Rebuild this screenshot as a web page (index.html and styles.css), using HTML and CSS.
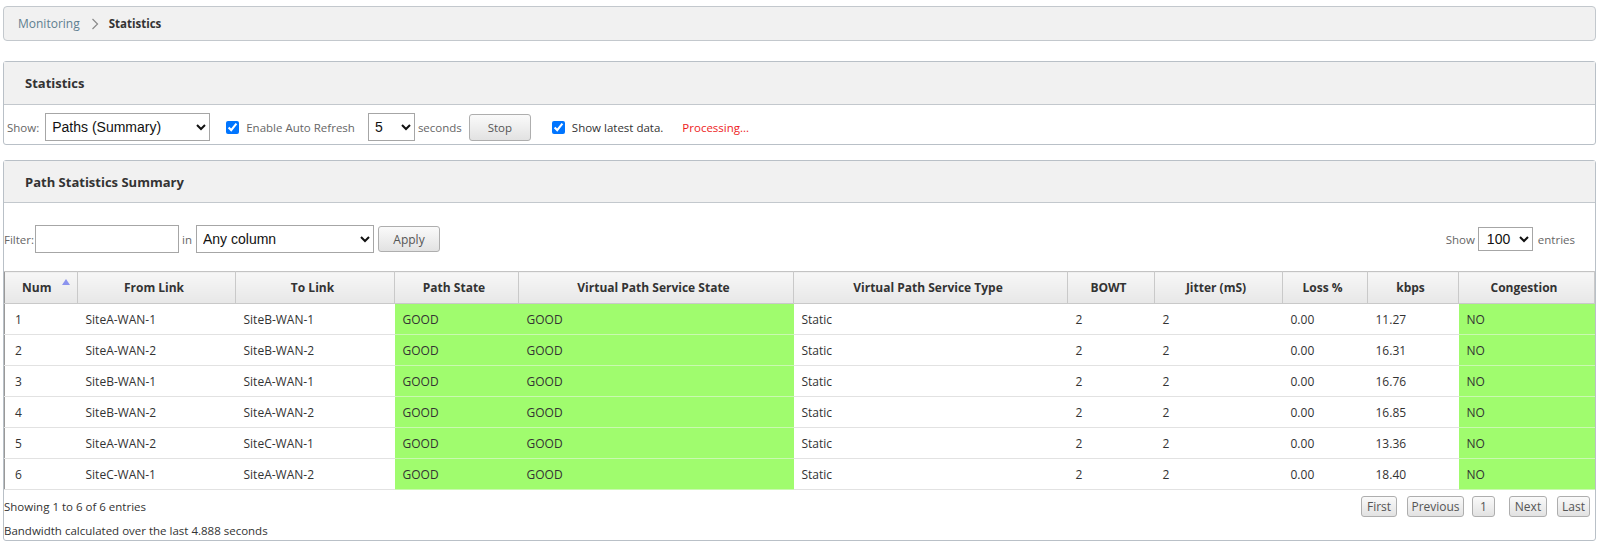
FILE: index.html
```html
<!DOCTYPE html>
<html>
<head>
<meta charset="utf-8">
<link rel="stylesheet" href="styles.css">
</head>
<body>
<div class="page">
  <nav class="crumbs">
    <span class="crumb-link">Monitoring</span>
    <svg class="crumb-sep" width="8" height="12" viewBox="0 0 8 12"><polyline points="1.5,1 6.5,6 1.5,11" fill="none" stroke="#8a8a8a" stroke-width="1.2"/></svg>
    <span class="crumb-cur">Statistics</span>
  </nav>

  <section class="panel">
    <div class="panel-head"><h2>Statistics</h2></div>
    <div class="controls">
      <span class="lbl lbl-show">Show:</span>
      <select class="sel sel-show"><option>Paths (Summary)</option></select>
      <label class="chk chk-auto"><input type="checkbox" checked><span>Enable Auto Refresh</span></label>
      <select class="sel sel-secs"><option>5</option></select>
      <span class="lbl lbl-secs">seconds</span>
      <button class="btn btn-stop">Stop</button>
      <label class="chk chk-latest"><input type="checkbox" checked><span>Show latest data.</span></label>
      <span class="processing">Processing...</span>
    </div>
  </section>

  <section class="panel panel-paths">
    <div class="panel-head head-paths"><h2>Path Statistics Summary</h2></div>
    <div class="filter-row">
      <div class="filter-left">
        <span class="lbl">Filter:</span>
        <input class="txt" type="text">
        <span class="lbl lbl-in">in</span>
        <select class="sel sel-col"><option>Any column</option></select>
        <button class="btn btn-apply">Apply</button>
      </div>
      <div class="filter-right">
        <span class="lbl">Show</span>
        <select class="sel sel-entries"><option>100</option></select>
        <span class="lbl">entries</span>
      </div>
    </div>

    <table class="grid">
      <colgroup>
        <col class="w-num"><col class="w-from"><col class="w-to"><col class="w-ps"><col class="w-vpss"><col class="w-vpst"><col class="w-bowt"><col class="w-jit"><col class="w-loss"><col class="w-kbps"><col class="w-cong">
      </colgroup>
      <thead>
        <tr>
          <th class="sorted">Num<span class="sort-up"></span></th>
          <th>From Link</th>
          <th>To Link</th>
          <th>Path State</th>
          <th>Virtual Path Service State</th>
          <th>Virtual Path Service Type</th>
          <th>BOWT</th>
          <th>Jitter (mS)</th>
          <th>Loss %</th>
          <th>kbps</th>
          <th>Congestion</th>
        </tr>
      </thead>
      <tbody>
        <tr><td>1</td><td>SiteA-WAN-1</td><td>SiteB-WAN-1</td><td class="ok">GOOD</td><td class="ok">GOOD</td><td>Static</td><td>2</td><td>2</td><td>0.00</td><td>11.27</td><td class="ok">NO</td></tr>
        <tr><td>2</td><td>SiteA-WAN-2</td><td>SiteB-WAN-2</td><td class="ok">GOOD</td><td class="ok">GOOD</td><td>Static</td><td>2</td><td>2</td><td>0.00</td><td>16.31</td><td class="ok">NO</td></tr>
        <tr><td>3</td><td>SiteB-WAN-1</td><td>SiteA-WAN-1</td><td class="ok">GOOD</td><td class="ok">GOOD</td><td>Static</td><td>2</td><td>2</td><td>0.00</td><td>16.76</td><td class="ok">NO</td></tr>
        <tr><td>4</td><td>SiteB-WAN-2</td><td>SiteA-WAN-2</td><td class="ok">GOOD</td><td class="ok">GOOD</td><td>Static</td><td>2</td><td>2</td><td>0.00</td><td>16.85</td><td class="ok">NO</td></tr>
        <tr><td>5</td><td>SiteA-WAN-2</td><td>SiteC-WAN-1</td><td class="ok">GOOD</td><td class="ok">GOOD</td><td>Static</td><td>2</td><td>2</td><td>0.00</td><td>13.36</td><td class="ok">NO</td></tr>
        <tr><td>6</td><td>SiteC-WAN-1</td><td>SiteA-WAN-2</td><td class="ok">GOOD</td><td class="ok">GOOD</td><td>Static</td><td>2</td><td>2</td><td>0.00</td><td>18.40</td><td class="ok">NO</td></tr>
      </tbody>
    </table>

    <div class="foot-row">
      <span class="info">Showing 1 to 6 of 6 entries</span>
      <div class="pager">
        <button class="btn pbtn p-first">First</button>
        <button class="btn pbtn p-prev">Previous</button>
        <button class="btn pbtn p-num">1</button>
        <button class="btn pbtn p-next">Next</button>
        <button class="btn pbtn p-last">Last</button>
      </div>
    </div>
    <div class="bw">Bandwidth calculated over the last 4.888 seconds</div>
  </section>
</div>
</body>
</html>
```

FILE: styles.css
```css
* { box-sizing: border-box; }
html, body { margin: 0; padding: 0; background: #fff; }
body {
  font-family: "Open Sans", "Noto Sans", sans-serif;
  font-size: 11.5px;
  color: #333;
}
.page { padding: 6px 4px 0 3px; }

.crumbs {
  height: 35px;
  border: 1px solid #c3c8cd;
  border-radius: 4px;
  background: #f1f1f1;
  display: flex;
  align-items: center;
  padding-left: 14px;
  font-size: 12px;
}
.crumb-link { color: #5f7f90; }
.crumb-sep { margin: 0 10px 0 11px; }
.crumb-cur { font-weight: 700; color: #333; font-size: 11.5px; }

.panel {
  margin-top: 20px;
  border: 1px solid #b9c0c7;
  border-radius: 3px;
}
.panel-paths { margin-top: 15px; }
.panel-head {
  height: 43px;
  background: #f1f1f1;
  border-bottom: 1px solid #c3c8cd;
  display: flex;
  align-items: center;
  padding-left: 21px;
}
.head-paths { height: 42px; }
.panel-head h2 { margin: 0; font-size: 13px; font-weight: 700; color: #333; }

.controls {
  display: flex;
  align-items: center;
  padding: 8px 0 3px 3px;
  height: 39px;
}
.lbl { color: #666; font-size: 11.5px; }
.sel {
  font-family: "Liberation Sans", Arial, sans-serif;
  font-size: 14px;
  color: #111;
  border: 1px solid #a6a6a6;
  border-radius: 0;
  background: #fff;
  height: 28px;
  padding: 0 2px;
}
.sel-show { width: 165px; margin-left: 6px; }
.chk { display: flex; align-items: center; color: #666; }
.chk input { width: 13px; height: 13px; margin: 0 7px 0 0; }
.chk-auto { margin-left: 16px; }
.sel-secs { width: 47px; margin-left: 13px; }
.lbl-secs { margin-left: 3px; }
.btn {
  font-family: "Open Sans", "Noto Sans", sans-serif;
  font-size: 11.5px;
  color: #555;
  border: 1px solid #aeaeae;
  border-radius: 3px;
  background: linear-gradient(#fafafa, #e2e2e2);
  padding: 0;
}
.btn-stop { width: 62px; height: 27px; margin-left: 7px; }
.chk-latest { margin-left: 21px; }
.chk-latest span { color: #333; }
.processing { color: #ee1c1c; margin-left: 19px; }

.filter-row {
  display: flex;
  justify-content: space-between;
  align-items: center;
  margin-top: 22px;
  margin-bottom: 18px;
  height: 28px;
}
.filter-left { display: flex; align-items: center; }
.filter-right { display: flex; align-items: center; padding-right: 20px; }
.txt {
  width: 144px; height: 28px;
  border: 1px solid #a6a6a6;
  margin-left: 1px;
}
.lbl-in { margin-left: 3px; }
.sel-col { width: 178px; margin-left: 4px; }
.btn-apply { width: 62px; height: 26px; margin-left: 4px; font-size: 12px; }
.sel-entries { width: 55px; height: 24px; margin: 0 5px 0 3px; padding: 0 4px; }

.grid {
  width: 100%;
  border-collapse: collapse;
  table-layout: fixed;
  font-size: 12px;
}
.w-num { width: 73px; } .w-from { width: 158px; } .w-to { width: 159px; }
.w-ps { width: 124px; } .w-vpss { width: 275px; } .w-vpst { width: 274px; }
.w-bowt { width: 87px; } .w-jit { width: 128px; } .w-loss { width: 85px; }
.w-kbps { width: 91px; } .w-cong { width: auto; }

.grid th {
  height: 32px;
  background: linear-gradient(#f7f7f7, #e7e7e7);
  border: 1px solid #c9c9c9;
  border-top-color: #c3c3c3;
  font-weight: 700;
  color: #333;
  text-align: center;
  position: relative;
  padding: 0 5px 0 0;
}
.grid th:first-child { border-left-color: #999; }
.grid th.sorted { text-align: left; padding-left: 17px; }
.sort-up {
  position: absolute;
  left: 57px; top: 7px;
  width: 0; height: 0;
  border-left: 4px solid transparent;
  border-right: 4px solid transparent;
  border-bottom: 6px solid #8b93ee;
}
.grid td {
  height: 31px;
  border-bottom: 1px solid #e2e2e2;
  padding: 0 0 0 8px;
  color: #333;
  white-space: nowrap;
}
.grid td:first-child { border-left: 1px solid #999; padding-left: 10px; }
.grid td.ok { background: #a0fc6e; border-bottom-color: #c9f9b0; }

.foot-row {
  display: flex;
  justify-content: space-between;
  align-items: center;
  height: 32px;
  padding-right: 5px;
}
.info { color: #333; }
.pager { display: flex; }
.pbtn { height: 21px; padding: 0; font-size: 12px; }
.p-first { width: 36px; }
.p-prev { width: 57px; margin-left: 10px; }
.p-num { width: 23px; margin-left: 8px; }
.p-next { width: 38px; margin-left: 14px; }
.p-last { width: 33px; margin-left: 10px; }
.bw { height: 18px; padding-top: 2px; line-height: 14px; color: #333; }
```
